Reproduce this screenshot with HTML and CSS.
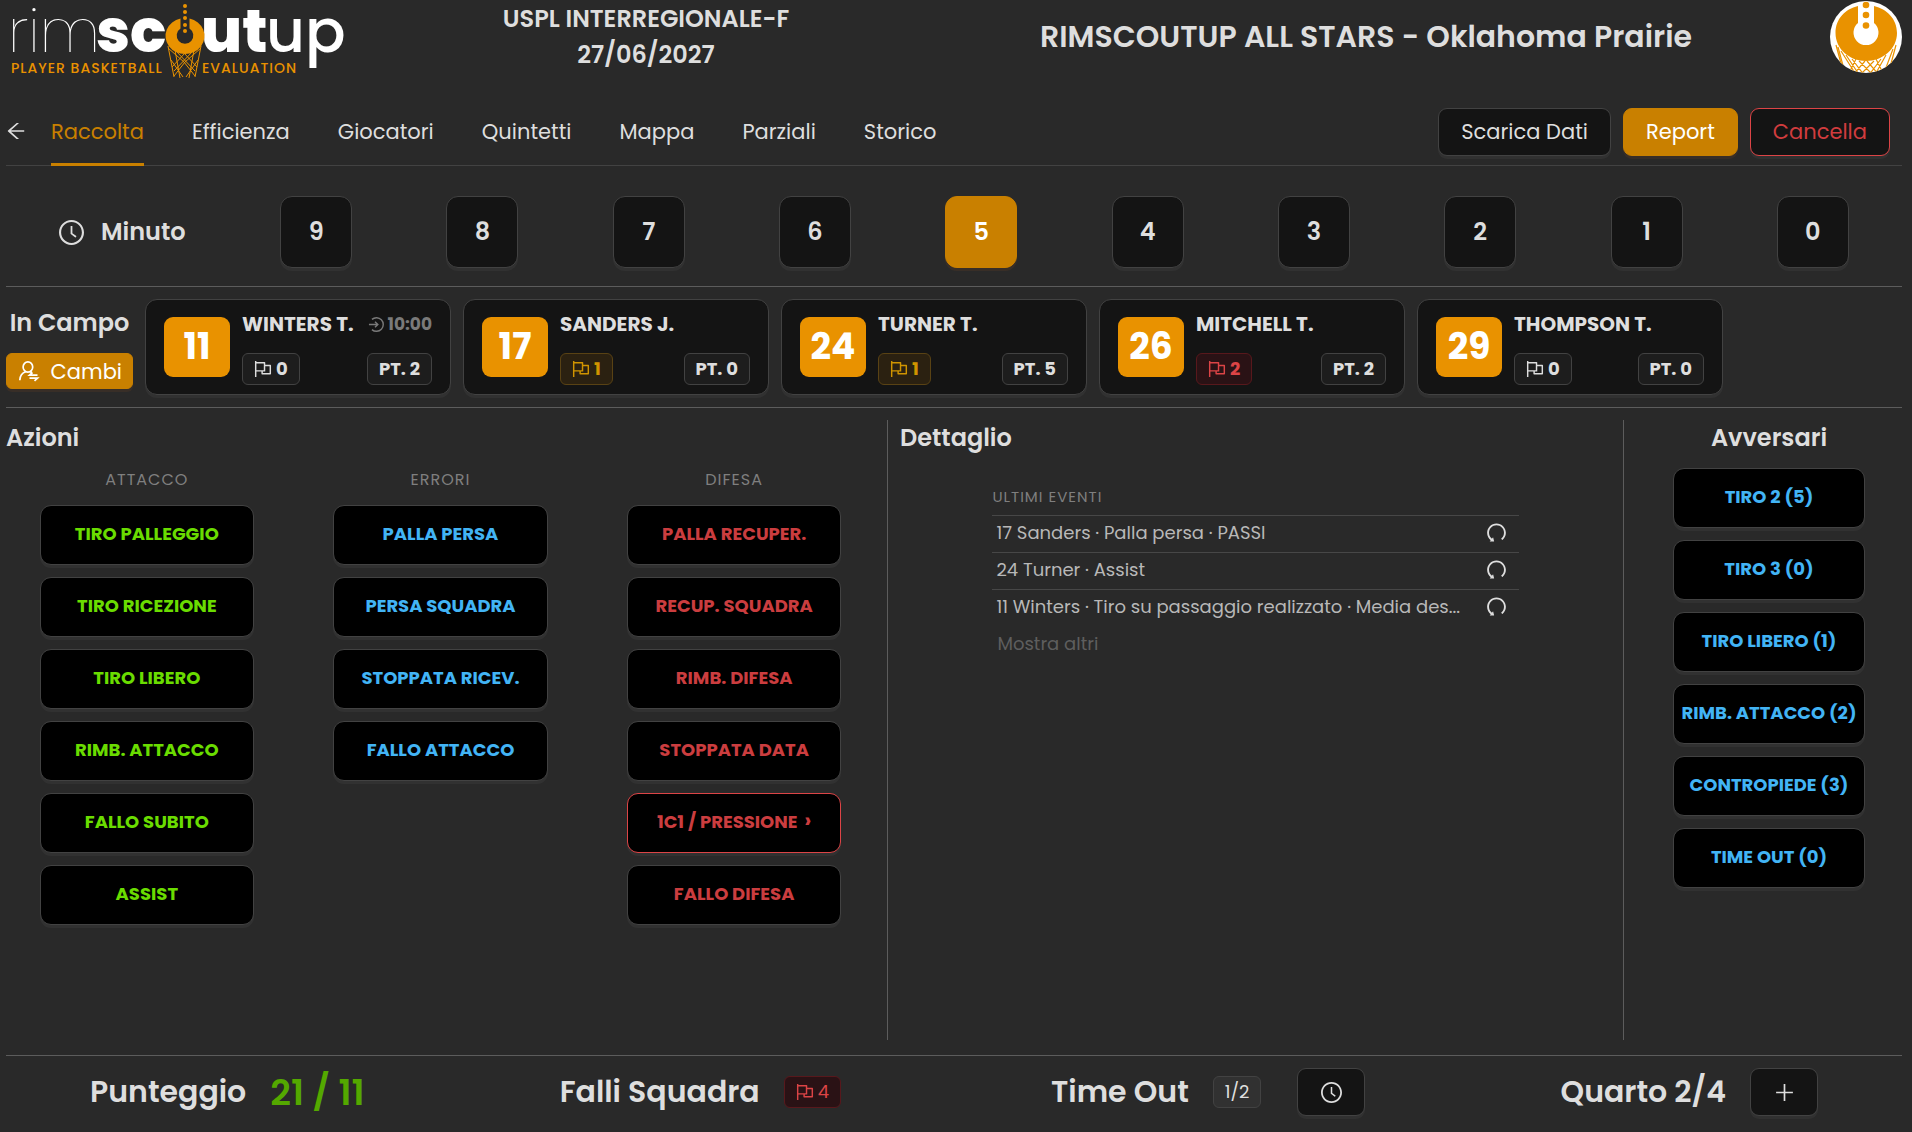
FILE: index.html
```html
<!DOCTYPE html>
<html lang="it">
<head>
    <meta charset="UTF-8">
    <meta name="viewport" content="width=device-width, initial-scale=1.0">
    <title>RimScoutUp - Raccolta</title>
    <link rel="stylesheet" href="styles.css">
</head>
<body>
    <svg class="icon-defs" aria-hidden="true">
        <symbol id="icon-flag" viewBox="64 64 896 896"><path d="M880 305H624V192c0-17.7-14.3-32-32-32H184v-40c0-4.4-3.6-8-8-8h-56c-4.4 0-8 3.6-8 8v784c0 4.4 3.6 8 8 8h56c4.4 0 8-3.6 8-8V640h248v113c0 17.7 14.3 32 32 32h416c17.7 0 32-14.3 32-32V337c0-17.7-14.3-32-32-32zM184 568V232h368v336H184zm656 145H504v-73h112c4.4 0 8-3.6 8-8V377h216v336z"/></symbol>
        <symbol id="icon-clock" viewBox="64 64 896 896"><path d="M512 64C264.6 64 64 264.6 64 512s200.6 448 448 448 448-200.6 448-448S759.4 64 512 64zm0 820c-205.4 0-372-166.6-372-372s166.6-372 372-372 372 166.6 372 372-166.6 372-372 372z"/><path d="M686.7 638.6L544.1 535.5V288c0-4.4-3.6-8-8-8H488c-4.4 0-8 3.6-8 8v275.4c0 2.6 1.2 5 3.3 6.5l165.4 120.6c3.6 2.6 8.6 1.8 11.2-1.7l28.6-39c2.6-3.7 1.8-8.7-1.8-11.2z"/></symbol>
        <symbol id="icon-back" viewBox="64 64 896 896"><path d="M872 474H286.9l350.2-304c5.6-4.9 2.2-14-5.2-14h-88.5c-3.9 0-7.6 1.4-10.5 3.9L155 487.8a31.96 31.96 0 000 48.3L535.1 866c1.5 1.3 3.3 2 5.2 2h91.5c7.4 0 10.8-9.2 5.2-14L286.9 550H872c4.4 0 8-3.6 8-8v-60c0-4.4-3.6-8-8-8z"/></symbol>
        <symbol id="icon-undo" viewBox="64 64 896 896"><path d="M511.4 124C290.5 124.3 112 303 112 523.9c0 128 60.2 242 153.8 315.2l-37.5 48c-4.1 5.3-.3 13 6.3 12.9l167-.8c5.2 0 9-4.9 7.7-9.9L369.8 727a8 8 0 00-14.1-3L315 776.1c-10.2-8-20-16.7-29.3-26a318.64 318.64 0 01-68.6-101.7C200.4 609 192 567.1 192 523.9s8.4-85.1 25.1-124.5c16.1-38.1 39.2-72.3 68.6-101.7 29.4-29.4 63.6-52.5 101.7-68.6C426.9 212.4 468.8 204 512 204s85.1 8.4 124.5 25.1c38.1 16.1 72.3 39.2 101.7 68.6 29.4 29.4 52.5 63.6 68.6 101.7 16.7 39.4 25.1 81.3 25.1 124.5s-8.4 85.1-25.1 124.5a318.64 318.64 0 01-68.6 101.7c-7.5 7.5-15.3 14.5-23.4 21.2a7.93 7.93 0 00-1.2 11.1l39.4 50.5c2.8 3.5 7.9 4.1 11.4 1.3C854.5 760.8 912 649.1 912 523.9c0-221.1-179.4-400.2-400.6-399.9z"/></symbol>
        <symbol id="icon-plus" viewBox="0 0 20 20"><path d="M9.2 2h1.6v7.2h7.2v1.6h-7.2V18H9.2v-7.2H2V9.2h7.2z"/></symbol>
        <symbol id="icon-login" viewBox="0 0 18 18"><path d="M4.2 3.6a7.2 7.2 0 1 1 0 10.8M1 9h9M7.4 6.2L10.4 9l-3 2.8" fill="none" stroke="currentColor" stroke-width="1.5"/></symbol>
        <symbol id="icon-switch" viewBox="0 0 22 22"><path d="M14.7 7a4.8 5.2 0 1 1-9.6 0a4.8 5.2 0 0 1 9.6 0M1.8 20.2C2 16 4.2 12.9 7.8 11.8M12 11.8l2 .8M19.5 15.2h-8l3-2.7M11.5 18.2h8l-3 2.7" fill="none" stroke="currentColor" stroke-width="1.7"/></symbol>
    </svg>

    <header class="header">
        <svg class="logo" width="346" height="80" viewBox="0 0 346 80" role="img" aria-label="rimscoutup">
            <text class="logo-thin" x="2" y="52">rim</text>
            <text class="logo-bold" x="90" y="52">sc</text>
            <text class="logo-bold" x="195" y="52">ut</text>
            <text class="logo-up" x="260" y="52">up</text>
            <g fill="none" stroke="#e99200" stroke-width="1">
                <path d="M162 46l6 31M169 50l5 28M195 46l-6 31M188 50l-5 28M162 48l16 14 11 14M195 48l-16 14-11 14M165 60l12 17M192 60l-12 17M170 51l19 20M187 51l-19 20M178 53l13 14M179 53l-13 14"/>
            </g>
            <path fill="#e99200" d="M174.500 18.500a19.500 18 0 1 0 9 0v10a8.300 8.300 0 1 1-9 0z"/>
            <g fill="#e99200"><circle cx="179" cy="6" r="2"/><circle cx="179" cy="12" r="2"/><circle cx="179" cy="18" r="2"/><circle cx="179" cy="25" r="2"/><circle cx="179" cy="31" r="2"/></g>
            <text class="logo-tag" x="5" y="73">PLAYER BASKETBALL</text>
            <text class="logo-tag" x="196" y="73">EVALUATION</text>
        </svg>
        <div class="match-info">
            <div>USPL INTERREGIONALE-F</div>
            <div>27/06/2027</div>
        </div>
        <h1 class="match-title">RIMSCOUTUP ALL STARS - Oklahoma Prairie</h1>
        <svg class="team-badge" width="72" height="72" viewBox="0 0 72 72" role="img" aria-label="Rimscoutup All Stars">
            <defs><clipPath id="badge-clip"><circle cx="36" cy="36" r="36"/></clipPath></defs>
            <circle cx="36" cy="36" r="36" fill="#fff"/>
            <g clip-path="url(#badge-clip)">
                <path d="M6 44l7 26M8 46l7 26M11 50l14 22M16 54l12 18M22 58l12 16M29 60l14 14M37 60l12 14M46 58l6 12M66 44l-7 26M63 48l-9 24M56 54l-10 18M51 58l-12 16M44 60l-14 14M35 60l-12 14M26 58l-6 12" fill="none" stroke="#e99200" stroke-width="1.2"/>
                <path fill="#e99200" d="M28 5C15 8 5.5 18 5.5 32c0 16 14 28 30.5 28s31-12 31-28C67 18 57 8 44 5v17a12.5 12.5 0 1 1-16 0z"/>
                <circle cx="36" cy="4" r="3.3" fill="#e99200"/><circle cx="36" cy="14" r="3.3" fill="#e99200"/><circle cx="36" cy="24.5" r="3.3" fill="#e99200"/>
            </g>
        </svg>
    </header>

    <div class="toolbar">
        <a href="#" class="back-link" aria-label="Indietro"><svg class="icon"><use href="#icon-back"/></svg></a>
        <nav class="tabs">
            <a href="#" class="tab active">Raccolta</a>
            <a href="#" class="tab">Efficienza</a>
            <a href="#" class="tab">Giocatori</a>
            <a href="#" class="tab">Quintetti</a>
            <a href="#" class="tab">Mappa</a>
            <a href="#" class="tab">Parziali</a>
            <a href="#" class="tab">Storico</a>
        </nav>
        <div class="toolbar-actions">
            <button class="btn">Scarica Dati</button>
            <button class="btn btn-primary">Report</button>
            <button class="btn btn-danger">Cancella</button>
        </div>
    </div>

    <section class="minutes">
        <h2 class="minutes-label"><svg class="icon"><use href="#icon-clock"/></svg>Minuto</h2>
        <div class="minutes-grid">
            <button class="btn minute">9</button>
            <button class="btn minute">8</button>
            <button class="btn minute">7</button>
            <button class="btn minute">6</button>
            <button class="btn minute btn-primary">5</button>
            <button class="btn minute">4</button>
            <button class="btn minute">3</button>
            <button class="btn minute">2</button>
            <button class="btn minute">1</button>
            <button class="btn minute">0</button>
        </div>
    </section>

    <section class="lineup">
        <div class="lineup-side">
            <h2>In Campo</h2>
            <button class="btn btn-primary btn-cambi"><svg class="icon"><use href="#icon-switch"/></svg>Cambi</button>
        </div>
        <button class="player">
            <span class="player-number">11</span>
            <span class="player-info">
                <span class="player-row"><span class="player-name">WINTERS T.</span><span class="player-time"><svg class="icon"><use href="#icon-login"/></svg>10:00</span></span>
                <span class="player-row"><span class="tag"><svg class="icon"><use href="#icon-flag"/></svg>0</span><span class="tag">PT. 2</span></span>
            </span>
        </button>
        <button class="player">
            <span class="player-number">17</span>
            <span class="player-info">
                <span class="player-row"><span class="player-name">SANDERS J.</span></span>
                <span class="player-row"><span class="tag tag-warning"><svg class="icon"><use href="#icon-flag"/></svg>1</span><span class="tag">PT. 0</span></span>
            </span>
        </button>
        <button class="player">
            <span class="player-number">24</span>
            <span class="player-info">
                <span class="player-row"><span class="player-name">TURNER T.</span></span>
                <span class="player-row"><span class="tag tag-warning"><svg class="icon"><use href="#icon-flag"/></svg>1</span><span class="tag">PT. 5</span></span>
            </span>
        </button>
        <button class="player">
            <span class="player-number">26</span>
            <span class="player-info">
                <span class="player-row"><span class="player-name">MITCHELL T.</span></span>
                <span class="player-row"><span class="tag tag-danger"><svg class="icon"><use href="#icon-flag"/></svg>2</span><span class="tag">PT. 2</span></span>
            </span>
        </button>
        <button class="player">
            <span class="player-number">29</span>
            <span class="player-info">
                <span class="player-row"><span class="player-name">THOMPSON T.</span></span>
                <span class="player-row"><span class="tag"><svg class="icon"><use href="#icon-flag"/></svg>0</span><span class="tag">PT. 0</span></span>
            </span>
        </button>
    </section>

    <main class="workspace">
        <section class="actions">
            <h2>Azioni</h2>
            <div class="actions-grid">
                <div class="action-column attack">
                    <h3>ATTACCO</h3>
                    <button class="btn action">TIRO PALLEGGIO</button>
                    <button class="btn action">TIRO RICEZIONE</button>
                    <button class="btn action">TIRO LIBERO</button>
                    <button class="btn action">RIMB. ATTACCO</button>
                    <button class="btn action">FALLO SUBITO</button>
                    <button class="btn action">ASSIST</button>
                </div>
                <div class="action-column errors">
                    <h3>ERRORI</h3>
                    <button class="btn action">PALLA PERSA</button>
                    <button class="btn action">PERSA SQUADRA</button>
                    <button class="btn action">STOPPATA RICEV.</button>
                    <button class="btn action">FALLO ATTACCO</button>
                </div>
                <div class="action-column defence">
                    <h3>DIFESA</h3>
                    <button class="btn action">PALLA RECUPER.</button>
                    <button class="btn action">RECUP. SQUADRA</button>
                    <button class="btn action">RIMB. DIFESA</button>
                    <button class="btn action">STOPPATA DATA</button>
                    <button class="btn action has-menu">1C1 / PRESSIONE <span class="chevron">›</span></button>
                    <button class="btn action">FALLO DIFESA</button>
                </div>
            </div>
        </section>

        <section class="detail">
            <h2>Dettaglio</h2>
            <div class="events">
                <h3>ULTIMI EVENTI</h3>
                <ul>
                    <li><span class="event-text">17 Sanders · Palla persa · PASSI</span><button class="undo" aria-label="Annulla"><svg class="icon"><use href="#icon-undo"/></svg></button></li>
                    <li><span class="event-text">24 Turner · Assist</span><button class="undo" aria-label="Annulla"><svg class="icon"><use href="#icon-undo"/></svg></button></li>
                    <li><span class="event-text">11 Winters · Tiro su passaggio realizzato · Media des...</span><button class="undo" aria-label="Annulla"><svg class="icon"><use href="#icon-undo"/></svg></button></li>
                </ul>
                <button class="show-more">Mostra altri</button>
            </div>
        </section>

        <section class="opponents errors">
            <h2>Avversari</h2>
            <button class="btn action">TIRO 2 (5)</button>
            <button class="btn action">TIRO 3 (0)</button>
            <button class="btn action">TIRO LIBERO (1)</button>
            <button class="btn action">RIMB. ATTACCO (2)</button>
            <button class="btn action">CONTROPIEDE (3)</button>
            <button class="btn action">TIME OUT (0)</button>
        </section>
    </main>

    <footer class="scoreboard">
        <div class="stat-group">
            <div class="stat">Punteggio <span class="score">21 / 11</span></div>
            <div class="stat">Falli Squadra <span class="tag tag-danger"><svg class="icon"><use href="#icon-flag"/></svg>4</span></div>
        </div>
        <div class="stat-group">
            <div class="stat">Time Out <span class="tag">1/2</span>
                <button class="btn btn-icon btn-timeout" aria-label="Time out"><svg class="icon"><use href="#icon-clock"/></svg></button>
            </div>
            <div class="stat">Quarto 2/4
                <button class="btn btn-icon" aria-label="Quarto successivo"><svg class="icon"><use href="#icon-plus"/></svg></button>
            </div>
        </div>
    </footer>
</body>
</html>
```
FILE: styles.css
```css
* {
    margin: 0;
    padding: 0;
    box-sizing: border-box;
}

body {
    min-height: 100vh;
    padding: 0 10px 0 6px;
    display: flex;
    flex-direction: column;
    font-family: Poppins, Inter, "Liberation Sans", sans-serif;
    font-size: 21px;
    background-color: #292929;
    color: #dedede;
}

button {
    font: inherit;
    color: inherit;
    cursor: pointer;
}

h2 {
    font-size: 24px;
    font-weight: 600;
    line-height: 36px;
}

h3 {
    font-size: 16px;
    font-weight: 400;
    color: #7f7f7f;
    letter-spacing: 1px;
}

.icon-defs {
    display: none;
}

.icon {
    width: 20px;
    height: 20px;
    fill: currentColor;
    flex: none;
}

/* Header */
.header {
    height: 96px;
    display: grid;
    grid-template-columns: 12fr 16fr 29fr 72px;
    align-items: start;
    text-align: center;
    font-weight: 600;
}

.logo-thin,
.logo-bold,
.logo-up {
    font-size: 60px;
    fill: #fff;
}

.logo-thin {
    font-weight: 200;
}

.logo-bold {
    font-weight: 800;
}

.logo-up {
    font-weight: 500;
}

.logo-tag {
    font-size: 14px;
    font-weight: 500;
    letter-spacing: 1px;
    fill: #e99200;
}

.match-info,
.match-title,
.team-badge {
    margin-top: 1px;
}

.match-info {
    font-size: 24px;
    line-height: 36px;
}

.match-title {
    font-size: 30px;
    font-weight: 600;
    line-height: 72px;
}

/* Toolbar */
.toolbar {
    height: 70px;
    display: flex;
    align-items: stretch;
    border-bottom: 1px solid #424242;
}

.back-link {
    width: 45px;
    display: flex;
    align-items: center;
    color: #dedede;
}

.tabs {
    display: flex;
    gap: 48px;
}

.tab {
    display: flex;
    align-items: center;
    margin-bottom: -1px;
    border-top: 3px solid transparent;
    border-bottom: 3px solid transparent;
    color: #dedede;
    text-decoration: none;
}

.tab.active {
    color: #c98000;
    border-bottom-color: #c98000;
}

.toolbar-actions {
    display: flex;
    align-items: center;
    gap: 12px;
    margin-left: auto;
    padding: 2px 12px 0 0;
}

.btn {
    height: 48px;
    padding: 0 22px;
    border: 1px solid #424242;
    border-radius: 9px;
    background: #141414;
    box-shadow: 0 3px 0 rgba(255, 255, 255, 0.04);
    white-space: nowrap;
}

.btn-primary {
    background: #c98000;
    border-color: #c98000;
    color: #fff;
    box-shadow: 0 3px 0 rgba(200, 100, 30, 0.1);
}

.btn-danger {
    border-color: #dc4446;
    color: #d13c3e;
}

/* Minutes */
.minutes {
    display: flex;
    align-items: center;
    padding: 30px 6px 18px 0;
    border-bottom: 1px solid #5c5c5c;
}

.minutes-label {
    width: 227px;
    padding-left: 53px;
    display: flex;
    align-items: center;
    gap: 17px;
}

.minutes-label .icon {
    width: 25px;
    height: 25px;
}

.minutes-grid {
    flex: 1;
    display: grid;
    grid-template-columns: repeat(10, 1fr);
    justify-items: center;
}

.minute {
    width: 72px;
    height: 72px;
    padding: 0 0 2px;
    border-radius: 12px;
    font-size: 24px;
    font-weight: 600;
}

/* Players on court */
.lineup {
    display: flex;
    gap: 12px;
    padding: 12px 0;
    border-bottom: 1px solid #5c5c5c;
}

.lineup-side {
    width: 127px;
    padding: 6px 0;
    display: flex;
    flex-direction: column;
    justify-content: space-between;
    text-align: center;
}

.btn-cambi {
    height: 36px;
    padding: 0 10px 0 11px;
    border-radius: 6px;
    display: flex;
    align-items: center;
    justify-content: space-between;
}

.btn-cambi .icon {
    width: 22px;
    height: 22px;
}

.player {
    flex: 0 1 306px;
    height: 96px;
    padding: 0 18px;
    display: flex;
    align-items: center;
    gap: 12px;
    background: #141414;
    border: 1px solid #424242;
    border-radius: 12px;
    box-shadow: 0 3px 0 rgba(255, 255, 255, 0.04);
    font-weight: 700;
    text-align: left;
}

.player-number {
    width: 66px;
    height: 60px;
    border-radius: 9px;
    background: #e99200;
    color: #fff;
    font-size: 36px;
    line-height: 60px;
    text-align: center;
}

.player-info {
    flex: 1;
    display: flex;
    flex-direction: column;
    gap: 14px;
}

.player-row {
    display: flex;
    align-items: center;
    justify-content: space-between;
    line-height: 30px;
}

.player-name {
    font-size: 20px;
    white-space: nowrap;
}

.player-time {
    display: flex;
    align-items: center;
    gap: 3px;
    font-size: 17px;
    color: #7a7a7a;
}

.player-time .icon {
    width: 17px;
    height: 17px;
}

.tag {
    height: 32px;
    padding: 0 11px;
    display: inline-flex;
    align-items: center;
    gap: 4px;
    border: 1px solid #424242;
    border-radius: 6px;
    background: rgba(255, 255, 255, 0.04);
    font-size: 18px;
    line-height: 30px;
}

.tag .icon {
    width: 18px;
    height: 18px;
}

.tag-warning {
    background: #2b2111;
    border-color: #594214;
    color: #d09400;
}

.tag-danger {
    background: #2a1215;
    border-color: #58181c;
    color: #dc4446;
}

/* Workspace */
.workspace {
    flex: 1;
    display: grid;
    grid-template-columns: 882fr 736fr 278fr;
    padding: 12px 0 15px;
}

.actions,
.detail {
    border-right: 1px solid #5c5c5c;
}

.actions {
    padding-right: 12px;
}

.actions-grid {
    display: grid;
    grid-template-columns: repeat(3, 1fr);
    gap: 12px;
}

.action-column {
    display: flex;
    flex-direction: column;
    align-items: center;
    gap: 12px;
    padding-top: 11px;
}

.action-column h3 {
    line-height: 26px;
}

.action {
    width: 76%;
    height: 60px;
    padding: 0 6px 3px;
    border-radius: 11px;
    background: #000;
    font-size: 18px;
    font-weight: 700;
}

.attack .action {
    color: #6adc00;
}

.errors .action {
    color: #42b4f5;
}

.defence .action {
    color: #cb3d3f;
}

.defence .has-menu {
    border-color: #dc4446;
}

.chevron {
    margin-left: 3px;
    font-size: 21px;
    line-height: 18px;
}

.detail {
    padding: 0 12px;
}

.events {
    width: 74%;
    margin: 29px auto 0;
}

.events h3 {
    font-size: 15px;
    line-height: 24px;
    padding-bottom: 6px;
}

.events ul {
    list-style: none;
}

.events li {
    height: 37px;
    display: flex;
    align-items: center;
    justify-content: space-between;
    padding: 0 12px 3px 4px;
    border-top: 1px solid #474747;
}

.event-text {
    font-size: 18px;
    color: #b8b8b8;
    white-space: nowrap;
    overflow: hidden;
    text-overflow: ellipsis;
}

.undo {
    display: flex;
    border: none;
    background: none;
}

.undo .icon {
    width: 21px;
    height: 21px;
}

.show-more {
    padding-left: 5px;
    border: none;
    background: none;
    font-size: 18px;
    line-height: 36px;
    color: #5e5e5e;
}

.opponents {
    padding-left: 12px;
    display: flex;
    flex-direction: column;
    align-items: center;
    gap: 12px;
}

.opponents .action {
    width: 72%;
}

/* Bottom bar */
.scoreboard {
    padding: 12px 84px 16px;
    display: flex;
    gap: 210px;
    border-top: 1px solid #5c5c5c;
}

.stat-group {
    flex: 1 1 auto;
    display: flex;
    justify-content: space-between;
}

.stat {
    height: 48px;
    display: flex;
    align-items: center;
    gap: 24px;
    font-size: 30px;
    font-weight: 600;
    white-space: nowrap;
}

.score {
    font-size: 36px;
    color: #54a800;
}

.stat .tag {
    font-weight: 400;
}

.btn-icon {
    width: 68px;
    display: flex;
    align-items: center;
    justify-content: center;
}

.btn-icon .icon {
    width: 21px;
    height: 21px;
}

.btn-timeout {
    margin-left: 12px;
}
```
